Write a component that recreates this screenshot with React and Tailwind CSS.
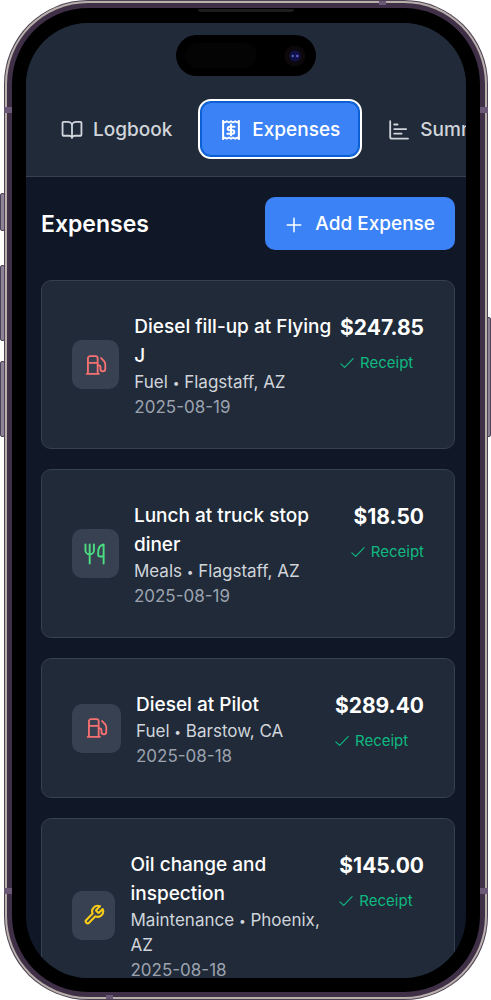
import React from "react";

function Icon({ className = "size-[22px]", stroke = 1.6, children }) {
  return (
    <svg
      viewBox="0 0 24 24"
      fill="none"
      stroke="currentColor"
      strokeWidth={stroke}
      strokeLinecap="round"
      strokeLinejoin="round"
      aria-hidden="true"
      className={`shrink-0 ${className}`}
    >
      {children}
    </svg>
  );
}

const BookIcon = () => (
  <Icon stroke={2}>
    <path d="M12 5.6v14.8" />
    <path d="M12 5.600C11 4 9.800 3.200 8 3.200H2.700a1 1 0 0 0-1 1v13.100a1 1 0 0 0 1 1h6.300c1.500 0 2.300.500 3 2.100.700-1.600 1.500-2.100 3-2.100h6.300a1 1 0 0 0 1-1V4.200a1 1 0 0 0-1-1H16c-1.800 0-3 .800-4 2.400z" />
  </Icon>
);

const ReceiptIcon = () => (
  <Icon stroke={2.2}>
    <path d="M3.400 2.200v19.600M20.600 2.200v19.600" />
    <path
      d="M3.400 2.400l1.800 1.400L7.400 2.400l2.300 1.400L12 2.400l2.300 1.400 2.300-1.400 2.200 1.400 1.800-1.400M3.400 21.600l1.800-1.400 2.200 1.400 2.300-1.400 2.300 1.400 2.300-1.400 2.300 1.400 2.200-1.400 1.800 1.400"
      strokeWidth="1.900"
    />
    <path d="M16 8.400h-5.700a1.900 1.900 0 0 0 0 3.800h3.400a1.900 1.900 0 0 1 0 3.800H8M12 6v12" />
  </Icon>
);

const ChartIcon = () => (
  <Icon stroke={2}>
    <path d="M2.400 2.400v17.200a1.800 1.800 0 0 0 1.800 1.800h17.600" />
    <path d="M6.800 6h3.600M6.800 11h13M6.800 16h8" />
  </Icon>
);

const FuelIcon = () => (
  <Icon stroke={2}>
    <path d="M3.200 21.600V4.600a2.200 2.200 0 0 1 2.200-2.200h6.200a2.200 2.200 0 0 1 2.200 2.200v17M1.800 21.600h13.400M3.200 9.600h10.600" />
    <path d="M13.800 12.400h1.400a1.700 1.700 0 0 1 1.700 1.700v2.300a2.600 2.600 0 0 0 5.200 0v-5.100c0-1.100-.300-2-.900-2.900l-3.600-4" />
  </Icon>
);

const MealIcon = () => (
  <Icon stroke={2.1}>
    <path d="M1.600 1.600v6.200a4.600 4.600 0 0 0 9.200 0V1.600M6.200 1.600v20.800" />
    <path d="M21.400 22.400V1.600c-3.600.600-5.900 4-5.900 8.600v2.600a2 2 0 0 0 2 2h3.900" />
  </Icon>
);

const WrenchIcon = () => (
  <Icon stroke={2.3}>
    <path d="M14.700 6.300a1 1 0 0 0 0 1.400l1.600 1.600a1 1 0 0 0 1.400 0l3.770-3.770a6 6 0 0 1-7.940 7.940l-6.910 6.910a2.120 2.120 0 0 1-3-3l6.910-6.910a6 6 0 0 1 7.940-7.940l-3.760 3.760z" />
  </Icon>
);

const TABS = [
  { label: "Logbook", icon: BookIcon },
  { label: "Expenses", icon: ReceiptIcon, active: true },
  { label: "Summary", icon: ChartIcon },
];

const EXPENSES = [
  { title: "Diesel fill-up at Flying J", category: "Fuel", place: "Flagstaff, AZ", date: "2025-08-19", amount: "$247.85", icon: FuelIcon, color: "text-[#f87171]" },
  { title: "Lunch at truck stop diner", category: "Meals", place: "Flagstaff, AZ", date: "2025-08-19", amount: "$18.50", icon: MealIcon, color: "text-[#4ade80]" },
  { title: "Diesel at Pilot", category: "Fuel", place: "Barstow, CA", date: "2025-08-18", amount: "$289.40", icon: FuelIcon, color: "text-[#f87171]" },
  { title: "Oil change and inspection", category: "Maintenance", place: "Phoenix, AZ", date: "2025-08-18", amount: "$145.00", icon: WrenchIcon, color: "text-[#facc15]" },
];

function Tab({ label, icon: TabIcon, active }) {
  return (
    <button
      type="button"
      aria-current={active ? "page" : undefined}
      className={`flex h-[54px] shrink-0 items-center gap-2.5 rounded-[10px] px-[19px] pt-[2px] text-[19px] font-medium ${
        active
          ? "bg-[#3b82f6] text-white shadow-[inset_0_0_0_1px_#0a5fd2,0_0_0_1px_#0a5fd2,0_0_0_3px_#ffffff]"
          : "text-[#d1d5db]"
      }`}
    >
      <TabIcon />
      {label}
    </button>
  );
}

function ExpenseCard({ title, category, place, date, amount, icon: CardIcon, color }) {
  return (
    <li className="flex items-start justify-between rounded-[10px] border border-[#354050] bg-[#202a38] px-[30px] py-7">
      <div className="flex min-w-0 items-center gap-[15px]">
        <div className={`flex h-[49px] w-[49px] min-w-0 items-center justify-center rounded-[10px] bg-[#374151] ${color}`}>
          <CardIcon />
        </div>
        <div className="min-w-0 pt-[3px]">
          <h3 className="text-[19px] leading-[29px] font-medium text-white">{title}</h3>
          <p className="text-[17px] leading-[25px] text-[#d1d5db]">
            {category} <span className="align-middle text-[12px] leading-none">•</span> {place}
          </p>
          <p className="text-[17px] leading-[25px] text-[#9ca3af]">{date}</p>
        </div>
      </div>
      <div className="shrink-0">
        <p className="text-right text-[21px] leading-[38px] font-bold text-white">{amount}</p>
        <p className="mt-1 flex items-center gap-1.5 text-[15px] leading-[24px] text-[#10b981]">
          <Icon className="size-[14px]" stroke={2}>
            <path d="M1.500 13.500l6.500 6L22.500 4.500" />
          </Icon>
          Receipt
        </p>
      </div>
    </li>
  );
}

function SideKey({ className }) {
  return (
    <span
      aria-hidden="true"
      className={`absolute w-[5px] rounded-[2px] border border-[#4b4255] bg-[#8d8298] ${className}`}
    />
  );
}

function Antenna({ className }) {
  return <span aria-hidden="true" className={`absolute bg-[#6b5876] ${className}`} />;
}

function PhoneFrame({ children }) {
  return (
    <div className="relative h-screen bg-white pr-[3px] pl-[4px]">
      <SideKey className="top-[193px] left-0 h-[38px]" />
      <SideKey className="top-[265px] left-0 h-[76px]" />
      <SideKey className="top-[361px] left-0 h-[76px]" />
      <SideKey className="top-[317px] right-0 h-[120px]" />
      <div className="relative h-full rounded-[84px] bg-[#4d4355] p-px">
        <div className="h-full rounded-[83px] bg-[#b9b0ac] p-[2px]">
          <div className="h-full rounded-[81px] bg-[#3f3048] p-[5px]">
            <div className="h-full rounded-[76px] bg-black px-[14px] pt-[15px] pb-[14px]">
              <div className="h-full overflow-hidden rounded-[62px] bg-[#101726]">{children}</div>
            </div>
          </div>
        </div>
        <Antenna className="top-[107px] left-0 h-[6px] w-2" />
        <Antenna className="top-[107px] right-0 h-[6px] w-2" />
        <Antenna className="bottom-[106px] left-0 h-[6px] w-2" />
        <Antenna className="right-0 bottom-[106px] h-[6px] w-2" />
        <Antenna className="top-px right-[102px] h-[4px] w-[7px]" />
        <Antenna className="bottom-px left-[102px] h-[4px] w-[7px]" />
        <span aria-hidden="true" className="absolute top-[9px] left-1/2 h-[3px] w-[96px] -translate-x-1/2 rounded-b-[3px] bg-[#1d1d1d]" />
        <div
          aria-hidden="true"
          className="absolute top-[35px] left-1/2 flex h-[41px] w-[140px] -translate-x-1/2 items-center justify-between rounded-full bg-black pr-[10px] pl-[9px]"
        >
          <span className="h-[25px] w-[72px] rounded-full bg-[#040404]" />
          <svg viewBox="0 0 22 22" className="size-[22px]">
            <circle cx="11" cy="11" r="10.500" fill="#0b070b" />
            <circle cx="11" cy="11" r="6" fill="#101036" />
            <circle cx="11" cy="11" r="4" fill="#11114f" />
            <circle cx="8.700" cy="11" r="1.200" fill="#3f6fb0" />
            <circle cx="13.300" cy="11" r="1.200" fill="#6a62d8" />
          </svg>
        </div>
      </div>
    </div>
  );
}

export default function App() {
  return (
    <div className="font-['Inter','Liberation_Sans',sans-serif]">
      <PhoneFrame>
        <nav className="flex gap-2.5 overflow-hidden border-b border-[#374151] bg-[#202a38] px-4 pt-[79px] pb-5">
          {TABS.map((tab) => (
            <Tab key={tab.label} {...tab} />
          ))}
        </nav>
        <main className="pt-5 pr-[11px] pl-[15px]">
          <div className="flex items-center justify-between">
            <h2 className="pt-[2px] text-[23px] font-semibold text-white">Expenses</h2>
            <button
              type="button"
              className="flex h-[53px] items-center gap-3 rounded-[10px] bg-[#3b82f6] px-5 pt-[2px] text-[19px] font-medium text-white"
            >
              <Icon className="size-[18px]" stroke={2}>
                <path d="M12 3v18M3 12h18" />
              </Icon>
              Add Expense
            </button>
          </div>
          <ul className="mt-[30px] flex flex-col gap-5">
            {EXPENSES.map((expense) => (
              <ExpenseCard key={expense.title} {...expense} />
            ))}
          </ul>
        </main>
      </PhoneFrame>
    </div>
  );
}
